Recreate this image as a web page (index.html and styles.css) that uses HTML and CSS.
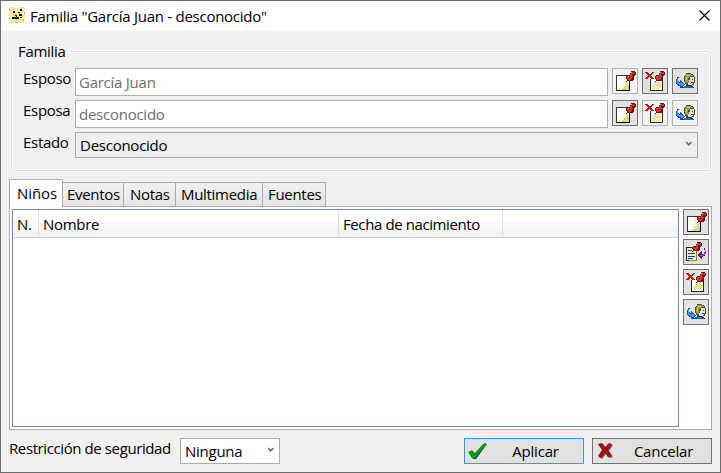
FILE: index.html
```html
<!DOCTYPE html>
<html lang="es">
<head>
<meta charset="utf-8">
<title>Familia</title>
<link rel="stylesheet" href="styles.css">
</head>
<body>
<svg class="defs" aria-hidden="true">
  <symbol id="pin" viewBox="0 0 10 11">
    <path fill="#6b1414" d="M5 0h4v1h1v3H9v1H8v4H7v1H2V9H1V8H0V5h1V4h3V2h1z"/>
    <path fill="#d8351f" d="M5 1h2v1h1v1H6v2h1v1H6v2H5v1H2V8H1V5h3V3h1zM8 1h1v2H8z"/>
    <path fill="#f09078" d="M2 5h1v1H2zM5 1h1v1H5z"/>
    <path fill="#402028" d="M3 6h1v1H3zM7 3h1v2H7zM1 9h1v1H1zM0 10h1v1H0z"/>
  </symbol>
  <symbol id="new" viewBox="0 0 24 24">
    <path fill="#35353f" d="M3 6h14v16H3z"/>
    <path fill="#000" d="M16 7h1v15H4v-1h12z"/>
    <path fill="#fff" d="M4 7h12v14H4z"/>
    <path fill="#f7f4d3" d="M10 7h6v14H6v-2h2v-3h2z"/>
    <path fill="#d9d68b" d="M13 14h2v3h1v4H9v-2h2v-2h2z"/>
    <use href="#pin" x="13" y="2" width="10" height="11"/>
  </symbol>
  <symbol id="delete" viewBox="0 0 24 24">
    <path fill="#222" d="M7 10h13v12H7z"/>
    <path fill="#fff" d="M8 10h11v11H8z"/>
    <path fill="#d8d67d" d="M11 13h1v1h-1zm2 0h1v1h-1zm2 0h1v1h-1zm-3 1h1v1h-1zm2 0h1v1h-1zm2 0h1v1h-1zm-5 1h1v1h-1zm2 0h1v1h-1zm2 0h1v1h-1zm2 0h1v1h-1zm-7 1h1v1h-1zm2 0h1v1h-1zm2 0h1v1h-1zm2 0h1v1h-1zm-7 1h1v1H9zm2 0h1v1h-1zm2 0h1v1h-1zm2 0h1v1h-1zm2 0h1v1h-1zm-7 1h1v1h-1zm2 0h1v1h-1zm2 0h1v1h-1zm2 0h1v1h-1zm-7 1h1v1H9zm2 0h1v1h-1zm2 0h1v1h-1zm2 0h1v1h-1zm2 0h1v1h-1z"/>
    <path fill="#d40f12" d="M2 3h3v1h1v1h2V4h1V3h2v1h-1v1H9v1H8v1h1v1h1v1h1v1H8V9H7V8H6v1H5v1H2V9h1V8h1V7h1V6H4V5H3V4H2z"/>
    <use href="#pin" x="12" y="2" width="10" height="11"/>
  </symbol>
  <symbol id="person" viewBox="0 0 24 24">
    <path fill="#55531a" d="M13 4h5v1h2v1h1v2h1v6h-1v2h-2v1h-5v-1h-1v-1h-1v-2h-1V7h1V6h1z"/>
    <path fill="#a29c48" d="M13 5h5v1h2v1h-3v1h-1v4h-1v2h-2v-1h-1V7h1z"/>
    <path fill="#d1ca7c" d="M14 6h3v1h-3zM13 8h1v3h-1z"/>
    <path fill="#d4e5d2" d="M17 8h4v5h-1v2h-1v1h-4v-3h1v-2h1z"/>
    <path fill="#3b4540" d="M19 10h1v1h-1zM18 13h2v1h-2zM15 9h1v2h-1z"/>
    <path fill="#112255" d="M9 18h2v-1h2v-1h5v1h2v1h1v1H9z"/>
    <path fill="#1768ed" d="M11 17h7v1h2v1H10v-1h1z"/>
    <path fill="#1250b8" d="M4 8h2v1H5v3h1v1h1v-2h1v1h1v1h1v1h1v1h1v1h-1v1h-1v1H9v1H7v-2H5v-1H4v-1H3v-5h1z"/>
    <path fill="#3f9af5" d="M4 10h1v3h1v1h2v-1h1v1h1v1h1v1h-1v1H8v-1H6v-1H4z"/>
  </symbol>
  <symbol id="insert" viewBox="0 0 24 24">
    <path fill="#222" d="M2 7h11v14H2z"/>
    <path fill="#f4f1bf" d="M3 8h9v12H3z"/>
    <path fill="#27445e" d="M4 10h4v1H4zm0 3h7v1H4zm0 3h7v1H4zm0 2h5v1H4z"/>
    <path fill="#8a8d35" d="M12 11h1v10H5v-1h7z"/>
    <use href="#pin" x="8" y="2" width="10" height="10"/>
    <path fill="#64136f" d="M20 8h1v2h1v4h-1v2h-2v1h-1v2h-1v-1h-1v-1h-1v-1h-1v-2h1v-1h1v-1h1v-1h1v3h2v-2h1v-2h-1z"/>
    <path fill="#bd55cc" d="M21 10h1v3h-1v2h-2v1h-3v-1h3v-1h1v-1h1z"/>
  </symbol>
  <symbol id="chevron" viewBox="0 0 8 6"><path d="M1.2 1 3.8 3.8 6.4 1" fill="none" stroke="#666" stroke-width="1.5"/></symbol>
</svg>
<div class="window">
  <header class="titlebar">
    <svg class="app-icon" viewBox="0 0 16 16" shape-rendering="crispEdges">
      <path fill="#f6e994" d="M0 0h5v1h5V0h6v3h-1v3h1v5h-1v3h1v2h-5v-1H6v1H0v-3h1V9H0V5h1V3H0z"/>
      <path fill="#b8ab68" d="M0 2h1v2H0zM15 5h1v2h-1zM0 10h1v2H0zM14 12h1v2h-1zM6 15h3v1H6z"/>
      <path fill="#111" d="M11 2h2v2h-2zM4 4h2v2H4zM9 5h2v1H9zM10 7h3v2h-3zM6 8h2v1H6zM3 10h4v2H3zM7 9h1v3H7zM8 10h2v2H8zM11 10h2v1h-2z"/>
    </svg>
    <span class="title">Familia "García Juan - desconocido"</span>
    <svg class="close" viewBox="0 0 11 11"><path d="M.5.5l10 10M10.5.5l-10 10" stroke="#000" stroke-width="1.1"/></svg>
  </header>
  <main class="content">
    <section class="group">
      <div class="legend"><span>Familia</span></div>
      <div class="row">
        <span class="label">Esposo</span><div class="field">García Juan</div>
        <div class="tool off"><svg><use href="#new"/></svg></div>
        <div class="tool"><svg><use href="#delete"/></svg></div>
        <div class="tool"><svg><use href="#person"/></svg></div>
      </div>
      <div class="row">
        <span class="label">Esposa</span><div class="field">desconocido</div>
        <div class="tool"><svg><use href="#new"/></svg></div>
        <div class="tool off"><svg><use href="#delete"/></svg></div>
        <div class="tool off"><svg><use href="#person"/></svg></div>
      </div>
      <div class="row">
        <span class="label">Estado</span>
        <div class="select wide"><span>Desconocido</span><svg class="chev"><use href="#chevron"/></svg></div>
      </div>
    </section>
    <nav class="tabs">
      <div class="tab active">Niños</div>
      <div class="tab eventos">Eventos</div>
      <div class="tab notas">Notas</div>
      <div class="tab multimedia">Multimedia</div>
      <div class="tab fuentes">Fuentes</div>
    </nav>
    <section class="panel">
      <div class="table">
        <div class="thead">
          <div class="th">N.</div><div class="th">Nombre</div><div class="th fecha">Fecha de nacimiento</div><div class="th last"></div>
        </div>
      </div>
      <div class="side">
        <div class="tool"><svg><use href="#new"/></svg></div>
        <div class="tool"><svg><use href="#insert"/></svg></div>
        <div class="tool"><svg><use href="#delete"/></svg></div>
        <div class="tool"><svg><use href="#person"/></svg></div>
      </div>
    </section>
    <footer class="footer">
      <span class="restr">Restricción de seguridad</span>
      <div class="select small"><span>Ninguna</span><svg class="chev"><use href="#chevron"/></svg></div>
      <div class="button default">
        <svg class="mark" viewBox="0 0 20 18"><path d="M1 11l3-2 3 3 9-10h3L8 17H5z" fill="#173f5b"/><path d="M0 10l4-2 3 3 8-9 3-1v2L7 16H4z" fill="#0a9a10"/></svg>
        <span>Aplicar</span>
      </div>
      <div class="button">
        <svg class="mark" viewBox="0 0 20 18"><path d="M3 3l4-1 3 4 4-4 3 1-4 6 4 6-4 1-3-4-4 5-3-2 4-6z" fill="#65676b"/><path d="M2 2l4-1 3 4 4-4 3 1-4 6 4 6-4 1-3-4-4 5-3-2 4-6z" fill="#a20d0d"/></svg>
        <span>Cancelar</span>
      </div>
    </footer>
  </main>
</div>
</body>
</html>
```
FILE: styles.css
```css
* { box-sizing: border-box; }
body {
  margin: 0;
  font-family: "Open Sans", "Noto Sans", sans-serif;
  font-size: 15px;
  letter-spacing: -0.3px;
  line-height: 20px;
  color: #000;
  white-space: nowrap;
}
svg { display: block; flex: none; }
.defs { position: absolute; width: 0; height: 0; }
.window {
  width: 721px;
  height: 473px;
  border: 1px solid #6d6d6d;
  background: #f0f0f0;
  overflow: hidden;
}
.titlebar {
  display: flex;
  align-items: center;
  height: 30px;
  padding: 0 10px 2px 8px;
  background: #fff;
}
.app-icon { width: 16px; height: 16px; margin-right: 5px; }
.title { letter-spacing: -0.26px; padding-top: 1px; }
.close { width: 11px; height: 11px; margin-left: auto; }
.content { padding: 20px 8px 0; }
.group {
  width: 700px;
  height: 120px;
  margin-left: 2px;
  padding: 0 12px 0 13px;
  border: 1px solid #d5dfe5;
  border-radius: 3px;
  box-shadow: inset 0 0 0 1px #fff, 0 0 0 1px #f8f8f8;
}
.legend { height: 16px; margin-left: -11px; }
.legend span {
  display: inline-block;
  padding: 0 4px;
  background: #f0f0f0;
  transform: translateY(-11px);
}
.row { display: flex; height: 32px; align-items: flex-start; }
.label { width: 52px; flex: none; margin-left: -2px; }
.field {
  width: 533px;
  height: 28px;
  margin-right: 4px;
  padding: 3px 3px;
  border: 1px solid #abadb3;
  background: #fff;
  color: #6d6d6d;
  letter-spacing: -0.25px;
}
.tool {
  width: 26px;
  height: 26px;
  flex: none;
  border: 1px solid #707070;
  background: #e1e1e1;
}
.tool.off { border-color: #adb2b5; background: #f4f4f4; }
.tool svg { width: 24px; height: 24px; shape-rendering: crispEdges; }
.row .tool { margin-right: 4px; }
.row .tool:last-child { margin-right: 0; }
.select {
  display: flex;
  height: 26px;
  padding: 0 4px;
  align-items: center;
  justify-content: space-between;
  border: 1px solid #acacac;
  letter-spacing: -0.25px;
}
.wide { width: 623px; flex: none; background: #efefef; }
.small { width: 100px; margin-left: 10px; background: #fff; }
.chev { width: 8px; height: 6px; margin-bottom: 2px; }
.tabs { display: flex; align-items: flex-end; height: 28px; margin-top: 8px; }
.tab {
  height: 25px;
  padding: 1px 0 0 5px;
  border: 1px solid #acacac;
  border-left-width: 0;
  background: linear-gradient(#f0f0f0, #e5e5e5);
}
.tab.active {
  position: relative;
  width: 54px;
  height: 28px;
  padding: 3px 0 0 7px;
  border-left-width: 1px;
  border-bottom: 0;
  background: #fff;
  letter-spacing: -0.1px;
}
.eventos { width: 61px; padding-left: 4px; }
.notas { width: 52px; padding-left: 6px; }
.multimedia { width: 87px; }
.fuentes { width: 63px; padding-left: 5px; }
.panel {
  display: flex;
  width: 703px;
  height: 224px;
  margin-top: -1px;
  padding: 2px;
  border: 1px solid #acacac;
  background: #fff;
}
.table { width: 667px; flex: none; height: 218px; border: 1px solid #688caf; }
.thead {
  display: grid;
  grid-template-columns: 26px 300px 164px 1fr;
  height: 28px;
  border-bottom: 1px solid #d5d5d5;
  background: linear-gradient(#fff 0 45%, #f7f8fa 46%, #f1f2f4);
}
.th { padding: 4px 0 0 4px; border-right: 1px solid #dfe1e4; letter-spacing: -0.3px; }
.th.fecha { letter-spacing: -0.4px; }
.th.last { border: 0; }
.side { display: flex; flex-direction: column; gap: 4px; margin-left: 4px; }
.footer { display: flex; width: 703px; padding-top: 8px; }
.restr { width: 161px; letter-spacing: -0.4px; }
.button {
  display: flex;
  width: 120px;
  height: 26px;
  margin-left: 8px;
  align-items: center;
  border: 1px solid #707070;
  background: #e1e1e1;
}
.button.default { margin-left: auto; border-color: #3399ff; }
.button span { flex: 1; text-align: center; letter-spacing: -0.2px; }
.mark { width: 20px; height: 18px; margin-left: 3px; }
```
